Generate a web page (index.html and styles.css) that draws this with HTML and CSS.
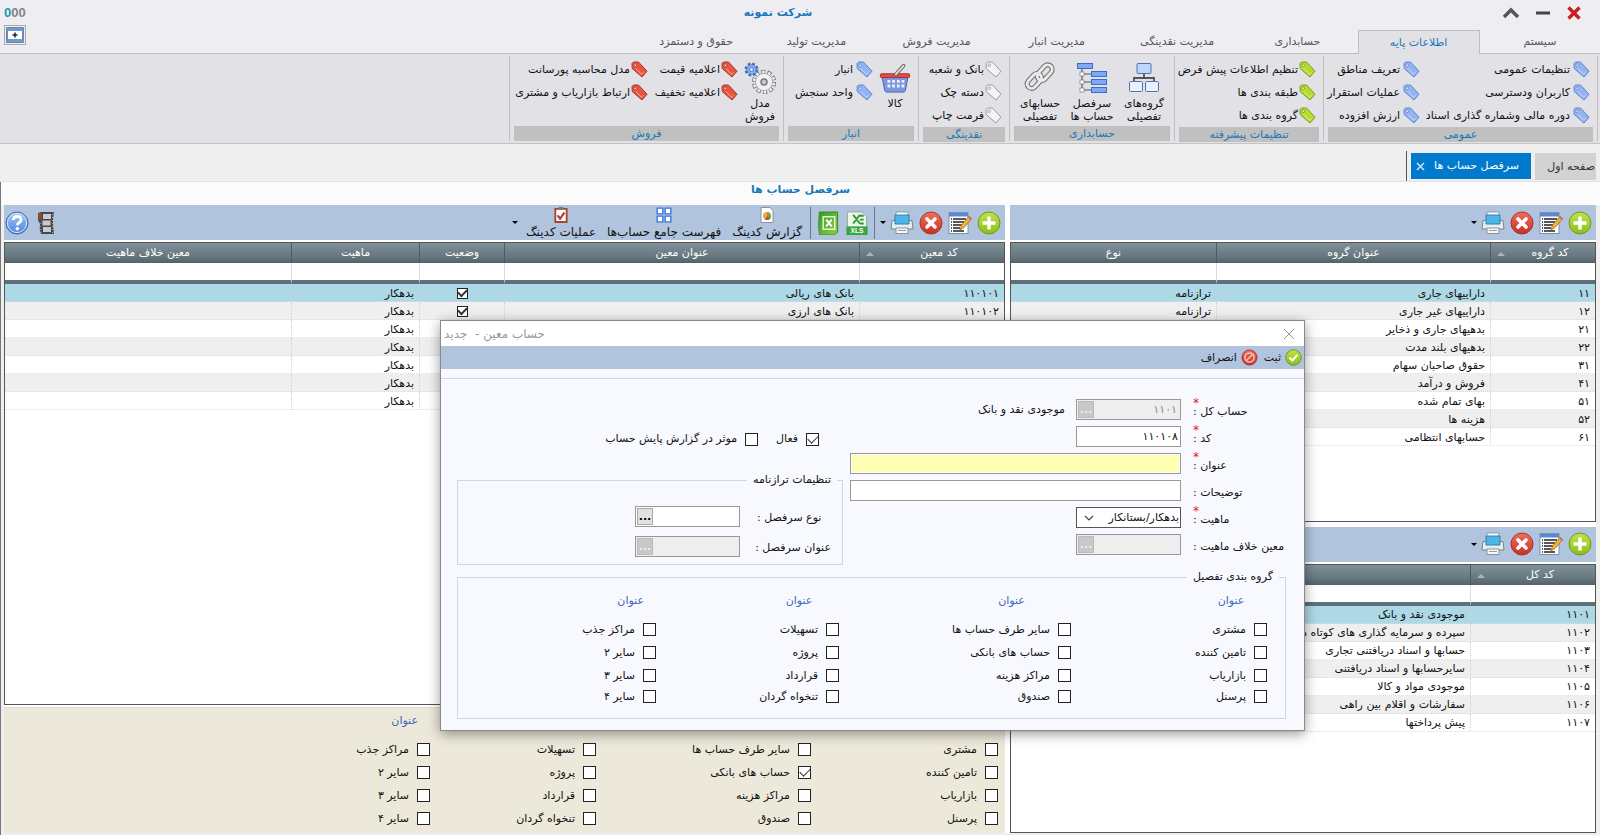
FILE: index.html
```html
<!DOCTYPE html>
<html lang="fa" dir="rtl">
<head>
<meta charset="utf-8">
<title>شرکت نمونه</title>
<link rel="stylesheet" href="styles.css">
</head>
<body>
<svg class="sprite" aria-hidden="true">
  <defs>
    <linearGradient id="g-green" x1="0" y1="0" x2="0" y2="1"><stop offset="0" stop-color="#c3e04a"/><stop offset="1" stop-color="#8abf1c"/></linearGradient>
    <linearGradient id="g-red" x1="0" y1="0" x2="0" y2="1"><stop offset="0" stop-color="#f0705c"/><stop offset="1" stop-color="#c92f24"/></linearGradient>
    <linearGradient id="g-blue" x1="0" y1="0" x2="0" y2="1"><stop offset="0" stop-color="#a9c8fa"/><stop offset="1" stop-color="#4f83dc"/></linearGradient>
    <linearGradient id="g-excel" x1="0" y1="0" x2="1" y2="1"><stop offset="0" stop-color="#2f9a2a"/><stop offset="1" stop-color="#8fd43f"/></linearGradient>
  </defs>
  <symbol id="tag" viewBox="0 0 17 17"><path d="M1 2.5 2.5 1h5l8.500 9.2-5 5.8L1.2 7.5z" fill="currentColor" stroke="var(--edge)" stroke-width="1" stroke-linejoin="round"/><path d="m5 7.5 5.5 5.8 2-2" fill="none" stroke="#fff" stroke-opacity=".5"/><circle cx="4.2" cy="4.2" r="1.3" fill="#fff" stroke="var(--edge)" stroke-width=".9"/></symbol>
  <symbol id="org" viewBox="0 0 32 32"><path d="M16 11v5M6 20v-4h20v4" fill="none" stroke="#555" stroke-width="1.8"/><g stroke="#56749f" fill="#e8f1ff"><rect x="9" y="1.500" width="14" height="10" rx="1" fill="#bcd6ff"/><rect x="1.500" y="19.500" width="13" height="10" rx="1"/><rect x="17.500" y="19.500" width="13" height="10" rx="1"/></g></symbol>
  <symbol id="tree" viewBox="0 0 32 32"><path d="M6 6v22M6 12h12M6 20h12M6 28h12" fill="none" stroke="#555" stroke-width="1.2"/><g fill="#7fa9f5" stroke="#3d6cc9"><rect x="1.500" y="1.500" width="15" height="5"/><rect x="15.500" y="9.500" width="15" height="5"/><rect x="15.500" y="17.500" width="15" height="5"/><rect x="15.500" y="25.500" width="15" height="5"/></g><g fill="#fff" stroke="#888" stroke-width=".8"><rect x="4" y="10" width="4" height="4"/><rect x="4" y="18" width="4" height="4"/><rect x="4" y="26" width="4" height="4"/></g></symbol>
  <symbol id="link" viewBox="0 0 32 32"><g fill="none" stroke-linecap="round"><g stroke="#777" stroke-width="5"><rect x="1" y="-4.500" width="17" height="9" rx="4.500" transform="translate(4 26) rotate(-48)"/><rect x="13" y="-4.500" width="18" height="9" rx="4.500" transform="translate(6 27) rotate(-48)"/></g><g stroke="#ececec" stroke-width="2.800"><rect x="1" y="-4.500" width="17" height="9" rx="4.500" transform="translate(4 26) rotate(-48)"/><rect x="13" y="-4.500" width="18" height="9" rx="4.500" transform="translate(6 27) rotate(-48)"/></g></g></symbol>
  <symbol id="basket" viewBox="0 0 34 32"><path d="M3 14h28l-3 15q-.5 2-2.500 2h-17Q6.500 31 6 29z" fill="#7d97dc" stroke="#4a62ad"/><g fill="#e8efff"><path d="M9 18h3v3H9zM14 18h3v3h-3zM19 18h3v3h-3zM24 18h3v3h-3zM9 23h3v3H9zM14 23h3v3h-3zM19 23h3v3h-3zM24 23h3v3h-3z"/></g><rect x="1.500" y="11.500" width="31" height="4" rx="1" fill="#e14d49" stroke="#aa2b2c"/><path d="M18 12 26 3" stroke="#666" stroke-width="4" stroke-linecap="round"/><path d="M18 12 26 3" stroke="#ddd" stroke-width="2" stroke-linecap="round"/></symbol>
  <symbol id="gears" viewBox="0 0 32 32"><g fill="none"><circle cx="7.500" cy="7.500" r="5.500" stroke="#4671c6" stroke-width="3" stroke-dasharray="2.700 1.620"/><circle cx="20" cy="20" r="10.200" stroke="#77777c" stroke-width="4" stroke-dasharray="4.200 2.209"/><circle cx="20" cy="20" r="9.700" stroke="#f2f2f4" stroke-width="3.400" stroke-dasharray="2.500 3.595" stroke-dashoffset="-.8"/></g><circle cx="7.500" cy="7.500" r="4.700" fill="#8fb1f5" stroke="#4671c6" stroke-width=".8"/><circle cx="7.500" cy="7.500" r="2" fill="#e2ebff" stroke="#4671c6"/><circle cx="20" cy="20" r="8.600" fill="#f0f0f2" stroke="#8d8d92" stroke-width=".6"/><circle cx="20" cy="20" r="3" fill="#b9cbe8" stroke="#777" stroke-width="1.500"/></symbol>
  <symbol id="add" viewBox="0 0 24 24"><circle cx="12" cy="12" r="11" fill="url(#g-green)" stroke="#6b9a1c"/><path d="M12 5.500v13M5.500 12h13" stroke="#fff" stroke-width="3.400"/></symbol>
  <symbol id="del" viewBox="0 0 24 24"><circle cx="12" cy="12" r="11" fill="url(#g-red)" stroke="#a8332b"/><path d="m8 8 8 8m0-8-8 8" stroke="#fff" stroke-width="3.600" stroke-linecap="round"/></symbol>
  <symbol id="edit" viewBox="0 0 24 24"><rect x="1" y="1.500" width="19" height="21" fill="#fff" stroke="#7f8fb0"/><path d="M1 2h19v3.500H1z" fill="#5b86d8"/><path d="M3 8h1m1 0h13M3 11h1m1 0h11M3 14h1m1 0h9M3 17h1m1 0h7M3 20h1m1 0h11" stroke="#222" stroke-width="1.500"/><path d="m12 19 1.500-5L21 5.500l2.500 2.200-7.500 8.800z" fill="#f0b43a" stroke="#9a6a1e" stroke-width=".8"/><path d="m20 6.500 1-1.500 3 2.500-1.300 1.500z" fill="#d9655b"/></symbol>
  <symbol id="print" viewBox="0 0 24 24"><path d="M6 1h12v9H6z" fill="#fff" stroke="#8c9aa8"/><path d="M2 9.500h20l1 8.500H1z" fill="#e9edf1" stroke="#77838f"/><path d="M5 4h14v9H5z" fill="#4fb4e6" stroke="#2d83b5"/><path d="M6 17h12v5.500H6z" fill="#f8f8f8" stroke="#88929c"/><path d="M8 19.500h8" stroke="#999"/></symbol>
  <symbol id="excel" viewBox="0 0 22 25"><path d="M2 1h19v21l-4 3H2q-1.500-12 0-24z" fill="url(#g-excel)" stroke="#3a8a22"/><path d="M6 6h12v13H6z" fill="none" stroke="#e9f7dc" stroke-width="1.500"/><path d="m9 9 6 7m0-7-6 7" stroke="#fff" stroke-width="2"/></symbol>
  <symbol id="report" viewBox="0 0 14 16"><path d="M1 .5h9l3 3v12H1z" fill="#fff" stroke="#8d939e"/><circle cx="7" cy="9" r="4" fill="#e9a84d"/><path d="M7 9V5a4 4 0 0 1 3.500 6z" fill="#68ae4b"/><path d="m7 9 3.500 2A4 4 0 0 1 5 12.500z" fill="#c64c43"/></symbol>
  <symbol id="grid" viewBox="0 0 14 14"><g fill="#fff" stroke="#3c73dc" stroke-width="1.200"><path d="M1 1h5v5H1zM8 1h5v5H8zM1 8h5v5H1zM8 8h5v5H8z"/></g></symbol>
  <symbol id="clip" viewBox="0 0 15 17"><path d="M1.500 2h12v14h-12z" fill="#fff" stroke="#a4492d" stroke-width="2"/><path d="M5 0h5v3H5z" fill="#777"/><path d="m4 9 2.500 3.500L11 6" fill="none" stroke="#c32a2a" stroke-width="2.200"/></symbol>
  <symbol id="film" viewBox="0 0 18 24"><path d="M4 1h13q-2 9 0 22H4q-2-5-1-10L1 9V2z" fill="#4b4545"/><path d="M6 3h8v5H6zM5.500 9.500h8v5h-8zM6 16h8v5H6z" fill="#c5cbd6"/><path d="M1 2h4v8L1 8z" fill="#7a5035"/><path d="M15.500 3v19M4 12v10" stroke="#aaa" stroke-dasharray="1 2"/></symbol>
  <symbol id="help" viewBox="0 0 24 24"><circle cx="12" cy="12" r="11" fill="url(#g-blue)" stroke="#3563b4"/><circle cx="12" cy="12" r="9.600" fill="none" stroke="#d9e6ff"/><path d="M8.300 9q0-3.500 3.900-3.500T16 8.700q0 2-2 3.100-1.600.8-1.600 2.400" fill="none" stroke="#fff" stroke-width="2.800"/><circle cx="12.300" cy="17.700" r="1.800" fill="#fff"/></symbol>
  <symbol id="ok" viewBox="0 0 18 18"><circle cx="9" cy="9" r="8.200" fill="url(#g-green)" stroke="#68951b"/><path d="m4.800 9 3 3.200 5.400-6" fill="none" stroke="#fff" stroke-width="2.200"/></symbol>
  <symbol id="cancel" viewBox="0 0 18 18"><circle cx="9" cy="9" r="8" fill="url(#g-red)" stroke="#a8332b"/><circle cx="9" cy="9" r="4.800" fill="none" stroke="#f4c3bd" stroke-width="1.600"/><path d="m5.500 12.500 7-7" stroke="#f4c3bd" stroke-width="1.600"/></symbol>
</svg>

<header class="app-head">
  <div class="title-row">
    <div class="win-controls">
      <button aria-label="بستن"><svg width="16" height="16" viewBox="0 0 16 16"><path d="m2.500 2.500 11 11m0-11-11 11" stroke="#c8201c" stroke-width="3.400"/></svg></button>
      <button aria-label="کوچک کردن"><svg width="16" height="16" viewBox="0 0 16 16"><path d="M1 8h14" stroke="#444" stroke-width="3"/></svg></button>
      <button aria-label="جمع کردن"><svg width="18" height="16" viewBox="0 0 18 16"><path d="m2 12 7-7 7 7" fill="none" stroke="#555" stroke-width="3.400"/></svg></button>
    </div>
    <h1 class="app-title">شرکت نمونه</h1>
    <div class="counter" dir="ltr"><b>0</b>00</div>
  </div>
  <div class="tab-row">
    <nav class="ribbon-tabs">
      <button>سیستم</button><button class="active">اطلاعات پایه</button><button>حسابداری</button><button>مدیریت نقدینگی</button><button>مدیریت انبار</button><button>مدیریت فروش</button><button>مدیریت تولید</button><button>حقوق و دستمزد</button>
    </nav>
    <button class="pane-button" aria-label="پنجره"><svg width="18" height="16" viewBox="0 0 18 16"><path d="M1 1h16v14H1z" fill="#fff" stroke="#3d679c" stroke-width="1.500"/><path d="M1 1h16v3H1zM1 12h16v3H1z" fill="#6c9bd2"/><path d="M9 5.500v5M6.500 8h5" stroke="#223" stroke-width="1.500"/></svg></button>
  </div>
</header>

<section class="ribbon">
  <div class="group g-general">
    <div class="group-body">
      <div class="tags blue first"><button><svg><use href="#tag"/></svg>تنظیمات عمومی</button><button><svg><use href="#tag"/></svg>کاربران ودسترسی</button><button><svg><use href="#tag"/></svg>دوره مالی وشماره گذاری اسناد</button></div>
      <div class="tags blue"><button><svg><use href="#tag"/></svg>تعریف مناطق</button><button><svg><use href="#tag"/></svg>عملیات استقرار</button><button><svg><use href="#tag"/></svg>ارزش افزوده</button></div>
    </div>
    <div class="group-name">عمومی</div>
  </div>
  <div class="group g-advanced">
    <div class="group-body">
      <div class="tags green tight"><button><svg><use href="#tag"/></svg>تنظیم اطلاعات پیش فرض</button><button><svg><use href="#tag"/></svg>طبقه بندی ها</button><button><svg><use href="#tag"/></svg>گروه بندی ها</button></div>
    </div>
    <div class="group-name">تنظیمات پیشرفته</div>
  </div>
  <div class="group g-account">
    <div class="group-body">
      <button class="big"><svg><use href="#org"/></svg><span>گروه‌های<br>تفصیلی</span></button>
      <button class="big"><svg><use href="#tree"/></svg><span>سرفصل<br>حساب ها</span></button>
      <button class="big"><svg><use href="#link"/></svg><span>حسابهای<br>تفصیلی</span></button>
    </div>
    <div class="group-name">حسابداری</div>
  </div>
  <div class="group g-cash">
    <div class="group-body">
      <div class="tags white tight"><button><svg><use href="#tag"/></svg>بانک و شعبه</button><button><svg><use href="#tag"/></svg>دسته چک</button><button><svg><use href="#tag"/></svg>فرمت چاپ</button></div>
    </div>
    <div class="group-name">نقدینگی</div>
  </div>
  <div class="group g-store">
    <div class="group-body">
      <button class="big narrow"><svg><use href="#basket"/></svg><span>کالا</span></button>
      <div class="tags blue"><button><svg><use href="#tag"/></svg>انبار</button><button><svg><use href="#tag"/></svg>واحد سنجش</button></div>
    </div>
    <div class="group-name">انبار</div>
  </div>
  <div class="group g-sales">
    <div class="group-body">
      <button class="big narrow"><svg><use href="#gears"/></svg><span>مدل<br>فروش</span></button>
      <div class="tags red tight second"><button><svg><use href="#tag"/></svg>اعلامیه قیمت</button><button><svg><use href="#tag"/></svg>اعلامیه تخفیف</button></div>
      <div class="tags red tight"><button><svg><use href="#tag"/></svg>مدل محاسبه پورسانت</button><button><svg><use href="#tag"/></svg>ارتباط بازاریاب و مشتری</button></div>
    </div>
    <div class="group-name">فروش</div>
  </div>
</section>

<nav class="doc-tabs">
  <button class="home">صفحه اول</button>
  <button class="current">سرفصل حساب ها<svg width="9" height="9" viewBox="0 0 9 9"><path d="m1 1 7 7m0-7L1 8" stroke="#cfe6fa" stroke-width="1.500"/></svg></button>
  <span class="tab-edge"></span>
</nav>

<main class="page">
  <h2 class="page-title">سرفصل حساب ها</h2>
  <div class="panes">
    <section class="side">
      <div class="toolbar">
        <button aria-label="جدید"><svg><use href="#add"/></svg></button><button aria-label="ویرایش"><svg><use href="#edit"/></svg></button><button aria-label="حذف"><svg><use href="#del"/></svg></button><button class="with-arrow" aria-label="چاپ"><svg><use href="#print"/></svg><i class="arrow"></i></button>
      </div>
      <div class="grid-box upper">
        <table class="data">
          <colgroup><col class="w-group"><col class="w-name"><col></colgroup>
          <thead><tr><th class="sorted">کد گروه</th><th>عنوان گروه</th><th>نوع</th></tr>
          <tr class="filter"><td><input aria-label="فیلتر کد گروه"></td><td><input aria-label="فیلتر عنوان گروه"></td><td><input aria-label="فیلتر نوع"></td></tr></thead>
          <tbody>
            <tr class="selected"><td>۱۱</td><td>داراییهای جاری</td><td>ترازنامه</td></tr>
            <tr><td>۱۲</td><td>داراییهای غیر جاری</td><td>ترازنامه</td></tr>
            <tr><td>۲۱</td><td>بدهیهای جاری و ذخایر</td><td></td></tr>
            <tr><td>۲۲</td><td>بدهیهای بلند مدت</td><td></td></tr>
            <tr><td>۳۱</td><td>حقوق صاحبان سهام</td><td></td></tr>
            <tr><td>۴۱</td><td>فروش و درآمد</td><td></td></tr>
            <tr><td>۵۱</td><td>بهای تمام شده</td><td></td></tr>
            <tr><td>۵۲</td><td>هزینه ها</td><td></td></tr>
            <tr><td>۶۱</td><td>حسابهای انتظامی</td><td></td></tr>
          </tbody>
        </table>
      </div>
      <div class="toolbar lower-bar">
        <button aria-label="جدید"><svg><use href="#add"/></svg></button><button aria-label="ویرایش"><svg><use href="#edit"/></svg></button><button aria-label="حذف"><svg><use href="#del"/></svg></button><button class="with-arrow" aria-label="چاپ"><svg><use href="#print"/></svg><i class="arrow"></i></button>
      </div>
      <div class="grid-box lower">
        <table class="data">
          <colgroup><col class="w-total"><col></colgroup>
          <thead><tr><th class="sorted">کد کل</th><th></th></tr>
          <tr class="filter"><td><input aria-label="فیلتر کد کل"></td><td><input aria-label="فیلتر عنوان کل"></td></tr></thead>
          <tbody>
            <tr class="selected"><td>۱۱۰۱</td><td>موجودی نقد و بانک</td></tr>
            <tr><td>۱۱۰۲</td><td>سپرده و سرمایه گذاری های کوتاه مدت</td></tr>
            <tr><td>۱۱۰۳</td><td>حسابها و اسناد دریافتنی تجاری</td></tr>
            <tr><td>۱۱۰۴</td><td>سایرحسابها و اسناد دریافتنی</td></tr>
            <tr><td>۱۱۰۵</td><td>موجودی مواد و کالا</td></tr>
            <tr><td>۱۱۰۶</td><td>سفارشات و اقلام بین راهی</td></tr>
            <tr><td>۱۱۰۷</td><td>پیش پرداختها</td></tr>
          </tbody>
        </table>
      </div>
    </section>

    <section class="content">
      <div class="toolbar">
        <button aria-label="جدید"><svg><use href="#add"/></svg></button><button aria-label="ویرایش"><svg><use href="#edit"/></svg></button><button aria-label="حذف"><svg><use href="#del"/></svg></button><button class="with-arrow" aria-label="چاپ"><svg><use href="#print"/></svg><i class="arrow"></i></button>
        <span class="sep"></span>
        <button aria-label="خروجی XLS"><svg viewBox="0 0 22 25"><path d="M1 1h15l5 5v18H1z" fill="#eef5ec" stroke="#96a893"/><path d="m7 4 7 9m0-9-7 9M14 5h4M14 9h4M14 13h4" stroke="#2d9c35" stroke-width="2"/><path d="M0 16h22v9H0z" fill="#37a83d"/><text x="11" y="23" direction="ltr" text-anchor="middle" font-size="7" font-weight="700" fill="#fff" font-family="Liberation Sans">XLS</text></svg></button><button aria-label="خروجی اکسل"><svg><use href="#excel"/></svg></button>
        <span class="sep"></span>
        <button class="labelled"><svg><use href="#report"/></svg>گزارش کدینگ</button>
        <button class="labelled"><svg><use href="#grid"/></svg>فهرست جامع حساب‌ها</button>
        <button class="labelled"><svg><use href="#clip"/></svg>عملیات کدینگ</button>
        <i class="arrow"></i>
        <span class="spacer"></span>
        <button aria-label="فیلم آموزشی"><svg><use href="#film"/></svg></button><button aria-label="راهنما"><svg><use href="#help"/></svg></button>
      </div>
      <div class="grid-box">
        <table class="data">
          <colgroup><col class="w-code"><col class="w-title"><col class="w-state"><col class="w-nature"><col></colgroup>
          <thead><tr><th class="sorted">کد معین</th><th>عنوان معین</th><th>وضعیت</th><th>ماهیت</th><th>معین خلاف ماهیت</th></tr>
          <tr class="filter"><td><input aria-label="فیلتر کد معین"></td><td><input aria-label="فیلتر عنوان معین"></td><td><input aria-label="فیلتر وضعیت"></td><td><input aria-label="فیلتر ماهیت"></td><td><input aria-label="فیلتر معین خلاف ماهیت"></td></tr></thead>
          <tbody>
            <tr class="selected"><td>۱۱۰۱۰۱</td><td>بانک های ریالی</td><td class="mid"><input type="checkbox" class="small" aria-label="وضعیت ۱۱۰۱۰۱" checked></td><td>بدهکار</td><td></td></tr>
            <tr><td>۱۱۰۱۰۲</td><td>بانک های ارزی</td><td class="mid"><input type="checkbox" class="small" aria-label="وضعیت ۱۱۰۱۰۲" checked></td><td>بدهکار</td><td></td></tr>
            <tr><td></td><td></td><td></td><td>بدهکار</td><td></td></tr>
            <tr><td></td><td></td><td></td><td>بدهکار</td><td></td></tr>
            <tr><td></td><td></td><td></td><td>بدهکار</td><td></td></tr>
            <tr><td></td><td></td><td></td><td>بدهکار</td><td></td></tr>
            <tr><td></td><td></td><td></td><td>بدهکار</td><td></td></tr>
          </tbody>
        </table>
      </div>
      <div class="checks-panel">
        <div class="check-col"><h3>عنوان</h3><label><input type="checkbox">مشتری</label><label><input type="checkbox">تامین کننده</label><label><input type="checkbox">بازاریاب</label><label><input type="checkbox">پرسنل</label></div>
        <div class="check-col"><h3>عنوان</h3><label><input type="checkbox">سایر طرف حساب ها</label><label><input type="checkbox" checked>حساب های بانکی</label><label><input type="checkbox">مراکز هزینه</label><label><input type="checkbox">صندوق</label></div>
        <div class="check-col"><h3>عنوان</h3><label><input type="checkbox">تسهیلات</label><label><input type="checkbox">پروژه</label><label><input type="checkbox">قرارداد</label><label><input type="checkbox">تنخواه گردان</label></div>
        <div class="check-col"><h3>عنوان</h3><label><input type="checkbox">مراکز جذب</label><label><input type="checkbox">سایر ۲</label><label><input type="checkbox">سایر ۳</label><label><input type="checkbox">سایر ۴</label></div>
      </div>
    </section>
  </div>
</main>

<div class="dialog" role="dialog" aria-labelledby="dialog-title">
  <div class="dialog-title">
    <button aria-label="بستن پنجره"><svg width="12" height="12" viewBox="0 0 12 12"><path d="m1 1 10 10m0-10L1 11" stroke="#999"/></svg></button>
    <span id="dialog-title">حساب معین -&nbsp; جدید</span>
  </div>
  <div class="dialog-bar"><button><svg><use href="#ok"/></svg>ثبت</button><button><svg><use href="#cancel"/></svg>انصراف</button></div>
  <form class="dialog-body">
    <div class="form-top">
      <div class="fields">
        <label class="must" for="f-total">حساب کل :</label>
        <div class="control"><div class="picker off"><input id="f-total" value="۱۱۰۱" disabled><button type="button" aria-label="انتخاب حساب کل" disabled>...</button></div><span>موجودی نقد و بانک</span></div>
        <label class="must" for="f-code">کد :</label>
        <div class="control"><input class="text short" id="f-code" value="۱۱۰۱۰۸"></div>
        <label class="must" for="f-name">عنوان :</label>
        <div class="control"><input class="text required" id="f-name"></div>
        <label for="f-desc">توضیحات :</label>
        <div class="control"><input class="text" id="f-desc"></div>
        <label class="must" for="f-nature">ماهیت :</label>
        <div class="control"><div class="select"><select id="f-nature"><option>بدهکار/بستانکار</option><option>بدهکار</option><option>بستانکار</option></select><svg width="10" height="6" viewBox="0 0 10 6"><path d="m1 1 4 4 4-4" fill="none" stroke="#444" stroke-width="1.200"/></svg></div></div>
        <label for="f-against">معین خلاف ماهیت :</label>
        <div class="control"><div class="picker off"><input id="f-against" disabled><button type="button" aria-label="انتخاب معین" disabled>...</button></div></div>
      </div>
      <div class="options">
        <div class="flags"><label><input type="checkbox" checked>فعال</label><label><input type="checkbox">موثر در گزارش پایش حساب</label></div>
        <fieldset class="balance">
          <legend>تنظیمات ترازنامه</legend>
          <label for="f-kind">نوع سرفصل :</label>
          <div class="picker"><input id="f-kind"><button type="button" aria-label="انتخاب نوع سرفصل">...</button></div>
          <label for="f-head">عنوان سرفصل :</label>
          <div class="picker off"><input id="f-head" disabled><button type="button" aria-label="انتخاب عنوان سرفصل" disabled>...</button></div>
        </fieldset>
      </div>
    </div>
    <fieldset class="detail">
      <legend>گروه بندی تفصیل</legend>
      <div class="detail-cols">
        <div class="check-col"><h3>عنوان</h3><label><input type="checkbox">مشتری</label><label><input type="checkbox">تامین کننده</label><label><input type="checkbox">بازاریاب</label><label><input type="checkbox">پرسنل</label></div>
        <div class="check-col"><h3>عنوان</h3><label><input type="checkbox">سایر طرف حساب ها</label><label><input type="checkbox">حساب های بانکی</label><label><input type="checkbox">مراکز هزینه</label><label><input type="checkbox">صندوق</label></div>
        <div class="check-col"><h3>عنوان</h3><label><input type="checkbox">تسهیلات</label><label><input type="checkbox">پروژه</label><label><input type="checkbox">قرارداد</label><label><input type="checkbox">تنخواه گردان</label></div>
        <div class="check-col"><h3>عنوان</h3><label><input type="checkbox">مراکز جذب</label><label><input type="checkbox">سایر ۲</label><label><input type="checkbox">سایر ۳</label><label><input type="checkbox">سایر ۴</label></div>
      </div>
    </fieldset>
  </form>
</div>
</body>
</html>
```
FILE: styles.css
```css
* { box-sizing: border-box; }
body {
  margin: 0;
  min-height: 100vh;
  display: flex;
  flex-direction: column;
  position: relative;
  background: #efefef;
  color: #111;
  font: 11px/16px "DejaVu Sans", sans-serif;
}
h1, h2, h3 { margin: 0; font-size: 11px; }
button, input, select { font: inherit; color: inherit; }
button { margin: 0; padding: 0; border: 0; background: none; white-space: nowrap; }
svg { display: block; flex: none; }
label { white-space: nowrap; }
.sprite { position: absolute; width: 0; height: 0; }

/* window header */
.app-head { background: #eeedf2; border-bottom: 1px solid #bdbdc2; }
.title-row { display: grid; grid-template-columns: 1fr auto 1fr; align-items: center; height: 25px; padding: 0 18px 0 4px; }
.win-controls { display: flex; gap: 15px; }
.app-title { color: #1878b9; padding-right: 30px; }
.counter { text-align: left; color: #858585; font: bold 13px/16px "Liberation Sans", sans-serif; }
.counter b { color: #159cb5; }
.tab-row { display: flex; justify-content: space-between; align-items: flex-end; height: 28px; }
.ribbon-tabs { display: flex; flex: 0 1 964px; align-self: stretch; align-items: flex-end; margin-bottom: -1px; }
.ribbon-tabs button { flex: 1; height: 24px; color: #555; }
.ribbon-tabs .active { background: #e2e2e6; border: 1px solid #bdbdc2; border-bottom: 0; color: #1878b9; }
.pane-button { align-self: flex-start; margin-left: 4px; width: 22px; height: 20px; border: 1px solid #aaa; display: grid; place-items: center; }

/* ribbon */
.ribbon { display: flex; height: 90px; padding: 2px 2px 2px 0; background: #e2e2e6; border-bottom: 1px solid #c3c3c6; }
.group { display: flex; flex-direction: column; padding: 0 4px; border-left: 1px solid #bfbfc4; }
.group:first-child { border-right: 1px solid #bfbfc4; }
.group-body { display: flex; flex: 1; padding: 2px 3px 0 0; }
.group-name { background: #c0c0c0; color: #1878b9; text-align: center; height: 15px; line-height: 16px; }
.g-general { width: 275px; }
.g-advanced { width: 149px; }
.g-account { width: 165px; }
.g-cash { width: 91px; }
.g-store { width: 135px; }
.g-sales { width: 274px; }
.tags button { display: flex; align-items: center; gap: 3px; height: 23px; }
.tags.tight button { gap: 1px; }
.tags svg { width: 17px; height: 17px; }
.tags.first { flex: none; width: 170px; }
.tags.second { flex: none; width: 90px; }
.blue svg { color: #93b4f0; --edge: #5f86cf; }
.green svg { color: #b4dc2f; --edge: #7a9c1c; }
.white svg { color: #f4f4f6; --edge: #9a9aa0; }
.red svg { color: #e9553f; --edge: #a8352c; }
.big { display: flex; flex-direction: column; align-items: center; gap: 3px; width: 54px; padding-top: 4px; line-height: 13px; }
.big svg { width: 32px; height: 32px; }
.g-account .group-body { padding-right: 0; justify-content: space-between; }
.big.narrow { flex: none; width: 38px; margin-left: 3px; }
.g-store .group-body, .g-sales .group-body { padding-right: 0; }

/* document tabs */
.doc-tabs { display: flex; gap: 4px; height: 38px; padding: 7px 4px 0 0; border-bottom: 1px solid #e2e2e2; }
.doc-tabs .home { width: 61px; height: 27px; margin-top: 2px; padding-right: 1px; background: #d2d2d2; color: #333; text-align: right; }
.doc-tabs .current { display: flex; align-items: center; justify-content: space-between; width: 120px; height: 26px; margin-top: 2px; padding: 0 12px 0 5px; background: #007acc; color: #fff; }
.tab-edge { width: 1px; background: #555; }

/* page */
.page { flex: 1; display: flex; flex-direction: column; padding: 0 4px 2px 3px; border-left: 1px solid #777; }
.page-title { height: 23px; line-height: 16px; text-align: center; color: #1878b9; background: #fbfbfb; margin: 0 -4px 0 -3px; }
.panes { flex: 1; display: flex; gap: 5px; background: #fff; }
.side { flex: 586; display: flex; flex-direction: column; gap: 2px; min-width: 0; }
.content { flex: 1001; display: flex; flex-direction: column; gap: 2px; min-width: 0; }
.toolbar { display: flex; align-items: center; gap: 5px; height: 35px; padding: 0 4px 0 1px; background: #b0c4de; }
.toolbar svg { width: 24px; height: 24px; }
.toolbar .with-arrow { display: flex; align-items: center; gap: 4px; }
.arrow { border: 3px solid transparent; border-top-color: #000; border-bottom: 0; }
.sep { width: 1px; height: 32px; background: #66788f; }
.spacer { flex: 1; }
.toolbar .labelled { display: flex; flex-direction: column; align-items: center; gap: 2px; font-size: 12px; line-height: 14px; margin: 0 3px; }
.toolbar .labelled svg { width: 16px; height: 16px; }
.lower-bar { margin-top: 3px; }
.grid-box { flex: 1; border: 1px solid #555; background: #fff; overflow: hidden; min-height: 0; }
.grid-box.upper { flex: 280; }
.grid-box.lower { flex: 269; }
.data { width: 100%; table-layout: fixed; border-collapse: separate; border-spacing: 0; }
.data th { height: 20px; padding: 0; border-left: 1px solid #4c5a62; background: linear-gradient(#7f9098, #65767f 70%, #52626b); color: #fff; font-weight: 400; line-height: 14px; }
.data th:last-child { border-left: 0; }
.sorted::after { content: ""; float: left; margin: 6px 0 0 6px; border: 4px solid transparent; border-bottom-color: #aab4ba; border-top: 0; }
.filter td { height: 21px; padding: 0; border-left: 1px solid #ddd; border-bottom: 4px solid #5d6f78; }
.filter input { display: block; width: 100%; height: 17px; border: 0; padding: 0 4px; background: #fff; outline: 0; }
.data tbody td { height: 18px; padding: 1px 5px 0; border-left: 1px dotted #d0d0d0; border-bottom: 1px dotted #ddd; line-height: 15px; white-space: nowrap; overflow: hidden; }
.data tbody tr:nth-child(even) { background: #efefef; }
.data tbody .selected { background: #add8e6; }
.data td:last-child { border-left: 0; }
.data .mid { text-align: center; }
.w-group { width: 105px; }
.w-name { width: 274px; }
.w-total { width: 125px; }
.w-code { width: 145px; }
.w-title { width: 355px; }
.w-state { width: 85px; }
.w-nature { width: 128px; }

/* check boxes */
input[type="checkbox"] { appearance: none; display: grid; place-items: center; flex: none; width: 13px; height: 13px; margin: 0; border: 1px solid #222; background: #fff; }
input[type="checkbox"]:checked::after { content: ""; width: 9px; height: 5px; margin-bottom: 3px; border: solid #333; border-width: 0 0 1px 1px; transform: rotate(-45deg); }
input[type="checkbox"].small { width: 11px; height: 11px; margin: 0 auto; }
input[type="checkbox"].small:checked::after { width: 7px; height: 4px; border-width: 0 0 2px 2px; }
.check-col { justify-self: start; display: grid; grid-template-rows: 25px repeat(4, 23px); align-items: center; }
.check-col h3 { align-self: start; text-align: center; font-weight: 400; color: #3f62b8; }
.check-col:last-child h3 { text-align: right; padding-right: 12px; }
.check-col label { display: flex; align-items: center; gap: 8px; }
.checks-panel { display: grid; grid-template-columns: 187px 215px 166px 1fr; align-content: start; padding: 5px 7px 0 0; background: #ece8da; border-top: 1px solid #ddd9cc; min-height: 126px; }

/* dialog */
.dialog { position: absolute; top: 320px; left: 440px; right: 295px; background: #f8f9fe; border: 1px solid #8a8a8a; box-shadow: 0 3px 12px rgba(0, 0, 0, .4); }
.dialog-title { display: flex; justify-content: space-between; align-items: center; height: 25px; padding: 0 9px 0 3px; background: #fff; color: #999; font-size: 12px; }
.dialog-bar { display: flex; gap: 6px; height: 23px; padding: 0 2px; background: #b0c4de; }
.dialog-bar button { display: flex; align-items: center; gap: 4px; }
.dialog-bar svg { width: 17px; height: 17px; }
.dialog-body { margin-top: 9px; padding: 20px 18px 11px 16px; border-top: 1px solid #d3d6de; }
.form-top { display: flex; gap: 7px; }
.fields { flex: 436; display: grid; grid-template-columns: 93px 1fr; column-gap: 12px; row-gap: 6px; align-content: start; }
.fields > label { position: relative; height: 21px; line-height: 25px; text-align: left; }
.must::after { content: "*"; position: absolute; left: 0; top: -8px; color: #d22; font-size: 12px; }
.control { display: flex; align-items: center; gap: 11px; height: 21px; }
.text { width: 100%; height: 21px; padding: 0 2px; border: 1px solid #999; background: #fff; outline: 0; }
.text.short, .picker, .select { width: 105px; flex: none; }
.text.required { background: #ffffb3; border-color: #999; box-shadow: inset 0 0 0 1px #fff; }
.picker { display: flex; height: 21px; padding: 1px; border: 1px solid #999; background: #fff; }
.picker input { flex: 1; min-width: 0; border: 0; padding: 0 2px; background: none; outline: 0; }
.picker button { width: 16px; border: 1px solid #aaa; background: #e1e1e1; color: #000; font-weight: 700; line-height: 14px; }
.picker.off { background: #eee; color: #888; }
.picker.off button { background: #c8c8c8; border-color: #bbb; color: #eee; }
.select { display: flex; align-items: center; height: 21px; padding-left: 7px; border: 1px solid #555; background: #fff; }
.select select { flex: 1; min-width: 0; appearance: none; border: 0; padding: 0 1px; background: none; outline: 0; }
.options { flex: 386; padding-top: 32px; }
.flags { display: flex; gap: 18px; padding-right: 24px; margin-bottom: 25px; }
.flags label { display: flex; align-items: center; gap: 8px; height: 16px; }
fieldset { min-width: 0; margin: 0; border: 1px solid #d3d5e0; }
legend { padding: 0 6px; }
.balance { display: grid; grid-template-columns: 74px 105px; column-gap: 17px; row-gap: 9px; padding: 18px 11px 7px; }
.balance legend { margin-right: -6px; }
.balance label { height: 21px; text-align: left; line-height: 24px; }
.detail { margin-top: 4px; padding: 8px 18px 12px; }
.detail legend { margin-right: -12px; }
.detail-cols { display: grid; grid-template-columns: 196px 232px 183px 1fr; }
.detail .check-col { grid-template-rows: 25px repeat(3, 23px) 19px; }
```
